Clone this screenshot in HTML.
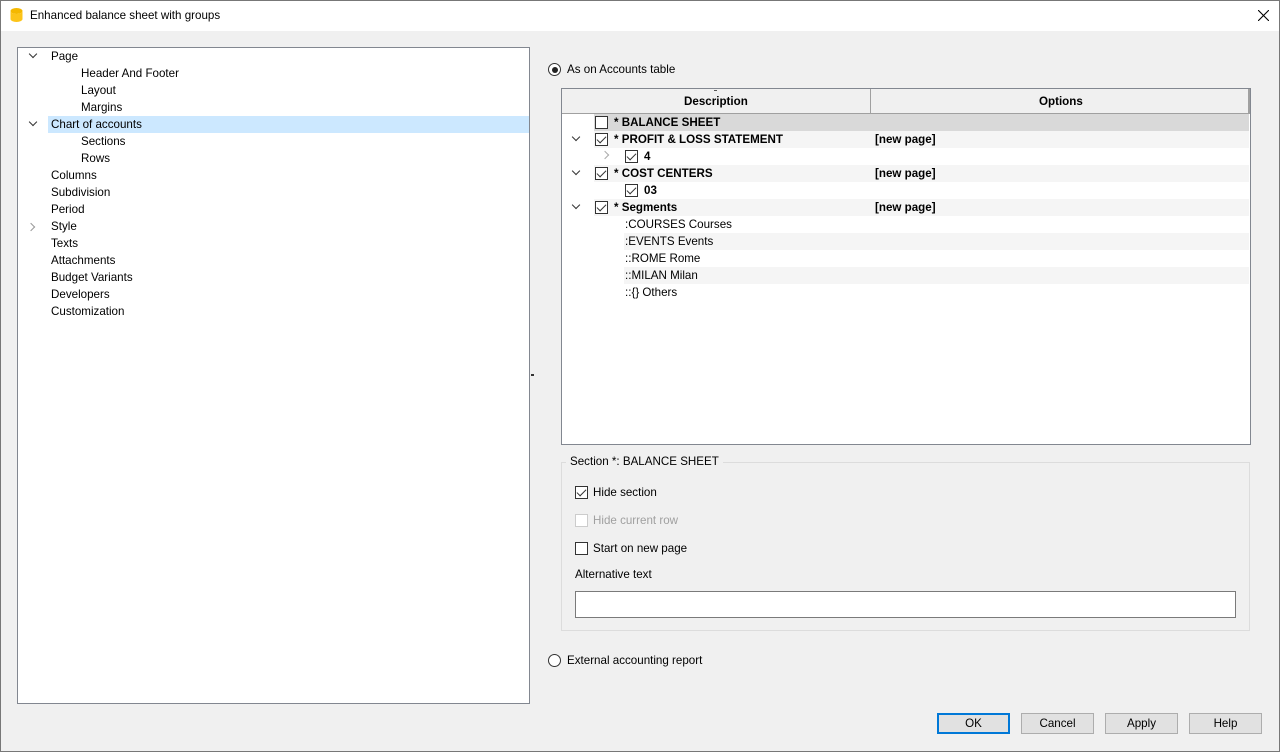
<!DOCTYPE html>
<html><head><style>
*{margin:0;padding:0;box-sizing:border-box}
body{width:1280px;height:752px;background:#f0f0f0;font-family:"Liberation Sans",sans-serif;font-size:11.6px;color:#000;position:relative;overflow:hidden}
.a{position:absolute;white-space:nowrap}
.cb{position:absolute;width:13px;height:13px;border:1px solid #333;background:#fff}
.cb.c::after{content:"";position:absolute;left:3px;top:0px;width:4px;height:8px;border:solid #333;border-width:0 1px 1px 0;transform:rotate(45deg)}
.chev{position:absolute;width:6px;height:6px;border:solid #333;border-width:0 1.8px 1.8px 0;transform:rotate(45deg)}
.row{position:absolute;left:0;width:687px;height:17px}
.b{font-weight:bold}
.btn{position:absolute;top:713px;width:73px;height:21px;border:1px solid #adadad;background:#e1e1e1;text-align:center;line-height:19px}
</style></head><body>
<div class="a" style="left:0;top:0;width:1280px;height:31px;background:#fff"></div>
<div class="a" style="left:0;top:0;width:1px;height:752px;background:#777"></div>
<div class="a" style="right:0;top:0;width:1px;height:752px;background:#777"></div>
<div class="a" style="left:0;bottom:0;width:1280px;height:1px;background:#777"></div>
<div class="a" style="left:0;top:0;width:1280px;height:1px;background:#777"></div>
<svg class="a" style="left:10px;top:7px" width="13" height="16"><ellipse cx="6.5" cy="4" rx="6" ry="3" fill="#f5b800"/><path d="M0.5 4v8a6 3 0 0 0 12 0V4a6 3 0 0 1-12 0z" fill="#fcc419"/></svg>
<div class="a" style="left:30px;top:9px">Enhanced balance sheet with groups</div>
<svg class="a" style="left:1258px;top:10px" width="11" height="11"><path d="M0 0L11 11M11 0L0 11" stroke="#000" stroke-width="1.1"/></svg>

<div class="a" style="left:17px;top:47px;width:513px;height:657px;background:#fff;border:1px solid #828790"></div>
<div class="a" style="left:48px;top:116px;width:481px;height:17px;background:#cce8ff"></div>
<div class="chev" style="left:30px;top:51px"></div>
<div class="chev" style="left:30px;top:119px"></div>
<div class="chev" style="left:28px;top:224px;transform:rotate(-45deg);border-color:#999"></div>
<div class="a" style="left:51px;top:50px">Page</div>
<div class="a" style="left:81px;top:67px">Header And Footer</div>
<div class="a" style="left:81px;top:84px">Layout</div>
<div class="a" style="left:81px;top:101px">Margins</div>
<div class="a" style="left:51px;top:118px">Chart of accounts</div>
<div class="a" style="left:81px;top:135px">Sections</div>
<div class="a" style="left:81px;top:152px">Rows</div>
<div class="a" style="left:51px;top:169px">Columns</div>
<div class="a" style="left:51px;top:186px">Subdivision</div>
<div class="a" style="left:51px;top:203px">Period</div>
<div class="a" style="left:51px;top:220px">Style</div>
<div class="a" style="left:51px;top:237px">Texts</div>
<div class="a" style="left:51px;top:254px">Attachments</div>
<div class="a" style="left:51px;top:271px">Budget Variants</div>
<div class="a" style="left:51px;top:288px">Developers</div>
<div class="a" style="left:51px;top:305px">Customization</div>
<div class="a" style="left:531px;top:374px;width:3px;height:2px;background:#333"></div>

<div class="a" style="left:548px;top:63px;width:13px;height:13px;border:1px solid #333;border-radius:50%;background:#fff"></div>
<div class="a" style="left:551.5px;top:66.5px;width:6px;height:6px;border-radius:50%;background:#222"></div>
<div class="a" style="left:567px;top:63px">As on Accounts table</div>

<div class="a" style="left:561px;top:88px;width:690px;height:357px;background:#fff;border:1px solid #828790">
 <div class="a" style="left:0;top:0;width:688px;height:25px;background:#f0f0f0;border-bottom:1px solid #a0a0a0"></div>
 <div class="a" style="left:308px;top:0;width:1px;height:25px;background:#a0a0a0"></div>
 <div class="a" style="left:686px;top:0;width:2px;height:25px;background:#a0a0a0"></div>
 <div class="a b" style="left:122px;top:6px">Description</div>
 <div class="a b" style="left:477px;top:6px">Options</div>
 <div class="a" style="left:152px;top:1px;width:3px;height:1px;background:#555"></div>
 <div style="position:absolute;left:0;top:25px">
  <div class="row" style="top:0;left:32px;width:655px;background:#d9d9d9"></div>
  <div class="row" style="top:17px;left:32px;width:655px;background:#f5f5f5"></div>
  <div class="row" style="top:51px;left:32px;width:655px;background:#f5f5f5"></div>
  <div class="row" style="top:85px;left:32px;width:655px;background:#f5f5f5"></div>
  <div class="row" style="top:119px;left:62px;width:625px;background:#f5f5f5"></div>
  <div class="row" style="top:153px;left:62px;width:625px;background:#f5f5f5"></div>
  <div class="cb" style="left:33px;top:2px"></div><div class="a b" style="left:52px;top:2px">* BALANCE SHEET</div>
  <div class="chev" style="left:11px;top:20px"></div><div class="cb c" style="left:33px;top:19px"></div><div class="a b" style="left:52px;top:19px">* PROFIT &amp; LOSS STATEMENT</div><div class="a b" style="left:313px;top:19px">[new page]</div>
  <div class="chev" style="left:40px;top:38px;transform:rotate(-45deg);border-color:#aaa"></div><div class="cb c" style="left:63px;top:36px"></div><div class="a b" style="left:82px;top:36px">4</div>
  <div class="chev" style="left:11px;top:54px"></div><div class="cb c" style="left:33px;top:53px"></div><div class="a b" style="left:52px;top:53px">* COST CENTERS</div><div class="a b" style="left:313px;top:53px">[new page]</div>
  <div class="cb c" style="left:63px;top:70px"></div><div class="a b" style="left:82px;top:70px">03</div>
  <div class="chev" style="left:11px;top:88px"></div><div class="cb c" style="left:33px;top:87px"></div><div class="a b" style="left:52px;top:87px">* Segments</div><div class="a b" style="left:313px;top:87px">[new page]</div>
  <div class="a" style="left:63px;top:104px">:COURSES Courses</div>
  <div class="a" style="left:63px;top:121px">:EVENTS Events</div>
  <div class="a" style="left:63px;top:138px">::ROME Rome</div>
  <div class="a" style="left:63px;top:155px">::MILAN Milan</div>
  <div class="a" style="left:63px;top:172px">::{} Others</div>
 </div>
</div>

<div class="a" style="left:561px;top:462px;width:689px;height:169px;border:1px solid #dcdcdc"></div>
<div class="a" style="left:566px;top:455px;padding:0 4px;background:#f0f0f0">Section *: BALANCE SHEET</div>
<div class="cb c" style="left:575px;top:486px"></div><div class="a" style="left:593px;top:486px">Hide section</div>
<div class="cb" style="left:575px;top:514px;border-color:#ccc"></div><div class="a" style="left:593px;top:514px;color:#a0a0a0">Hide current row</div>
<div class="cb" style="left:575px;top:542px"></div><div class="a" style="left:593px;top:542px">Start on new page</div>
<div class="a" style="left:575px;top:568px">Alternative text</div>
<div class="a" style="left:575px;top:591px;width:661px;height:27px;background:#fff;border:1px solid #7a7a7a"></div>

<div class="a" style="left:548px;top:654px;width:13px;height:13px;border:1px solid #333;border-radius:50%;background:#fff"></div>
<div class="a" style="left:567px;top:654px">External accounting report</div>

<div class="btn" style="left:937px;border:2px solid #0078d7;line-height:17px">OK</div>
<div class="btn" style="left:1021px">Cancel</div>
<div class="btn" style="left:1105px">Apply</div>
<div class="btn" style="left:1189px">Help</div>
</body></html>
